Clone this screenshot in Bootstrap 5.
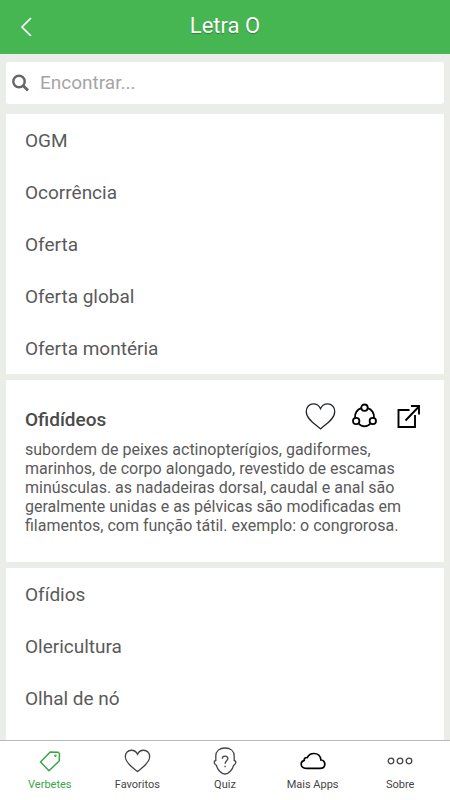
<!DOCTYPE html>
<html lang="pt">
<head>
<meta charset="utf-8">
<meta name="viewport" content="width=device-width, initial-scale=1">
<title>Letra O</title>
<link rel="stylesheet" href="https://cdn.jsdelivr.net/npm/bootstrap@5.3.0/dist/css/bootstrap.min.css">
<style>
  body { font-family: Roboto, "Liberation Sans", sans-serif; background: #ebede9; color: #5a5a5a; }
  svg { display: block; fill: none; stroke: currentColor; }
  .app-header { background: #46b653; height: 54px; display: grid; grid-template-columns: 52px 1fr 52px; padding-bottom: 2px; }
  .app-title { font-size: 22px; line-height: 28px; font-weight: 400; text-shadow: 0 1px 1px rgba(0,0,0,.3); }
  .app-content { padding: 8px 6px 0; }
  .search-box { height: 42px; border-radius: 3px; padding: 0 6px; color: #666; margin-bottom: 10px; }
  .search-box .form-control { font-size: 19px; line-height: 24px; padding: 0 10px; color: #555; }
  .search-box .form-control::placeholder { color: #a5a5a5; }
  .terms { gap: 6px; }
  .list-group { --bs-list-group-bg: #fff; }
  .term { font-size: 19px; line-height: 24px; padding: 15px 19px 13px; color: #5a5a5a; }
  .definition { padding: 22px 19px 27px; }
  .definition h2 { font-size: 19px; line-height: 24px; font-weight: 500; color: #4a4a4a; padding-top: 6px; }
  .definition p { font-size: 16px; line-height: 19px; }
  .tab-bar { height: 60px; border-top: 1px solid #b9b9b9; padding: 0 6px; }
  .tab { font-size: 11px; line-height: 14px; color: #444; }
  .tab.active { color: #39a647; }
  .tab-icon { height: 37px; padding-top: 3px; }
</style>
<script src="https://cdn.jsdelivr.net/npm/bootstrap@5.3.0/dist/js/bootstrap.bundle.min.js" defer></script>
</head>
<body>
<div class="d-flex flex-column vh-100 overflow-hidden">
  <header class="app-header text-white align-items-center flex-shrink-0">
    <button type="button" class="btn p-0 border-0 text-white d-flex justify-content-center" aria-label="Voltar">
      <svg width="14" height="20" viewBox="0 0 14 20" stroke-width="1.7"><path d="M12 2 3 11l9 9"/></svg>
    </button>
    <h1 class="app-title m-0 text-center">Letra O</h1>
  </header>

  <main class="app-content flex-grow-1 d-flex flex-column overflow-hidden">
    <form class="search-box bg-white d-flex align-items-center flex-shrink-0" role="search">
      <label for="find" aria-label="Encontrar">
        <svg width="18" height="18" viewBox="0 0 18 18" stroke-width="2.4"><circle cx="7" cy="7.500" r="5.700"/><path d="m11 11.500 5 5" stroke-width="2.800"/></svg>
      </label>
      <input id="find" type="search" class="form-control border-0 shadow-none bg-transparent" placeholder="Encontrar...">
    </form>

    <div class="terms d-flex flex-column flex-grow-1">
      <div class="list-group list-group-flush bg-white">
        <a href="#" class="term list-group-item list-group-item-action border-0">OGM</a>
        <a href="#" class="term list-group-item list-group-item-action border-0">Ocorrência</a>
        <a href="#" class="term list-group-item list-group-item-action border-0">Oferta</a>
        <a href="#" class="term list-group-item list-group-item-action border-0">Oferta global</a>
        <a href="#" class="term list-group-item list-group-item-action border-0">Oferta montéria</a>
      </div>

      <article class="definition bg-white">
        <div class="d-flex justify-content-between align-items-start mb-2">
          <h2 class="m-0">Ofidídeos</h2>
          <div class="d-flex gap-3 pe-1">
            <button type="button" class="btn p-0 border-0 text-dark" aria-label="Favoritar">
              <svg width="31" height="29" viewBox="0 0 32 29" stroke-width="1.3"><path d="M16 27.3C12 23.5 1.3 17.7 1.3 9.3c0-4.5 3.2-7.8 7.3-7.8 3.3 0 6 1.8 7.4 4.9 1.4-3.1 4.1-4.9 7.4-4.9 4.1 0 7.3 3.3 7.3 7.8C30.7 17.7 20 23.5 16 27.3Z"/></svg>
            </button>
            <button type="button" class="btn p-0 border-0 text-black" aria-label="Compartilhar">
              <svg width="25" height="28" viewBox="0 0 25 28" stroke-width="1.8"><circle cx="12.500" cy="4.700" r="3.200"/><circle cx="4.200" cy="18" r="3.200"/><circle cx="20.800" cy="18" r="3.200"/><path d="M9.300 5.200C5 6.700 2.900 10.400 3 14.700M15.700 5.200c4.300 1.500 6.400 5.200 6.300 9.500M6.500 20.500c2.900 3.700 9.100 3.700 12 0"/></svg>
            </button>
            <button type="button" class="btn p-0 border-0 text-black ms-1" aria-label="Abrir">
              <svg width="24" height="27" viewBox="0 0 24 27" stroke-width="1.9"><path d="M12.500 7H1.500v17h16.500V12M8.500 17.500 22 3.500M14 3h8v8.500"/></svg>
            </button>
          </div>
        </div>
        <p class="m-0">subordem de peixes actinopterígios, gadiformes, marinhos, de corpo alongado, revestido de escamas minúsculas. as nadadeiras dorsal, caudal e anal são geralmente unidas e as pélvicas são modificadas em filamentos, com função tátil. exemplo: o congrorosa.</p>
      </article>

      <div class="list-group list-group-flush bg-white flex-grow-1">
        <a href="#" class="term list-group-item list-group-item-action border-0">Ofídios</a>
        <a href="#" class="term list-group-item list-group-item-action border-0">Olericultura</a>
        <a href="#" class="term list-group-item list-group-item-action border-0">Olhal de nó</a>
      </div>
    </div>
  </main>

  <nav class="tab-bar bg-white d-flex flex-shrink-0" aria-label="Principal">
    <a href="#" class="tab active col text-decoration-none text-center" aria-current="page">
      <span class="tab-icon d-flex align-items-center justify-content-center"><svg width="22" height="22" viewBox="0 0 22 22" stroke-width="1.5"><path d="m1.500 12 9.700-10 7.800.2 1.500 1.300-.3 7.500L10 20.700Z"/><circle cx="16.400" cy="5.800" r=".5"/></svg></span>Verbetes</a>
    <a href="#" class="tab col text-decoration-none text-center">
      <span class="tab-icon d-flex align-items-center justify-content-center"><svg width="27" height="24" viewBox="0 0 32 29" stroke-width="1.6"><path d="M16 27.3C12 23.5 1.3 17.7 1.3 9.3c0-4.5 3.2-7.8 7.3-7.8 3.3 0 6 1.8 7.4 4.9 1.4-3.1 4.1-4.9 7.4-4.9 4.1 0 7.3 3.3 7.3 7.8C30.7 17.7 20 23.5 16 27.3Z"/></svg></span>Favoritos</a>
    <a href="#" class="tab col text-decoration-none text-center">
      <span class="tab-icon d-flex align-items-center justify-content-center"><svg width="24" height="28" viewBox="0 0 24 28" stroke-width="1.3"><path d="M12 1C6.500 1 2.800 4 2.800 9v4.500c-1.500.2-2 1.500-1.200 3 .5 1 1 1.500 1.800 1.800.8 3.500 4.500 8.700 8.600 8.700s7.800-5.200 8.600-8.700c.8-.3 1.300-.8 1.800-1.800.8-1.500.3-2.800-1.200-3V9c0-5-3.700-8-9.200-8Z"/><path d="M9.300 11.800c0-3.600 5.600-3.500 5.600-.2 0 2.200-2.800 2.300-2.800 5.200M12.100 18.700v1.600"/></svg></span>Quiz</a>
    <a href="#" class="tab col text-decoration-none text-center">
      <span class="tab-icon d-flex align-items-center justify-content-center text-black"><svg width="26" height="18" viewBox="0 0 26 18" stroke-width="1.700"><path d="M6 16.300h14c2.800 0 4.800-1.700 4.800-4.100 0-2.300-1.500-3.900-3.900-4.200C20.600 4 17.700 1.500 14 1.500c-3 0-5.400 1.400-6.600 4C5.300 5.300 4 6.500 4.200 8.400 2.200 9 1.200 10.500 1.200 12.300c0 2.300 2 4 4.800 4Z"/></svg></span>Mais Apps</a>
    <a href="#" class="tab col text-decoration-none text-center">
      <span class="tab-icon d-flex align-items-center justify-content-center"><svg width="26" height="8" viewBox="0 0 26 8" stroke-width="1.300"><circle cx="4" cy="4" r="2.800"/><circle cx="13" cy="4" r="2.800"/><circle cx="22" cy="4" r="2.800"/></svg></span>Sobre</a>
  </nav>
</div>
</body>
</html>
